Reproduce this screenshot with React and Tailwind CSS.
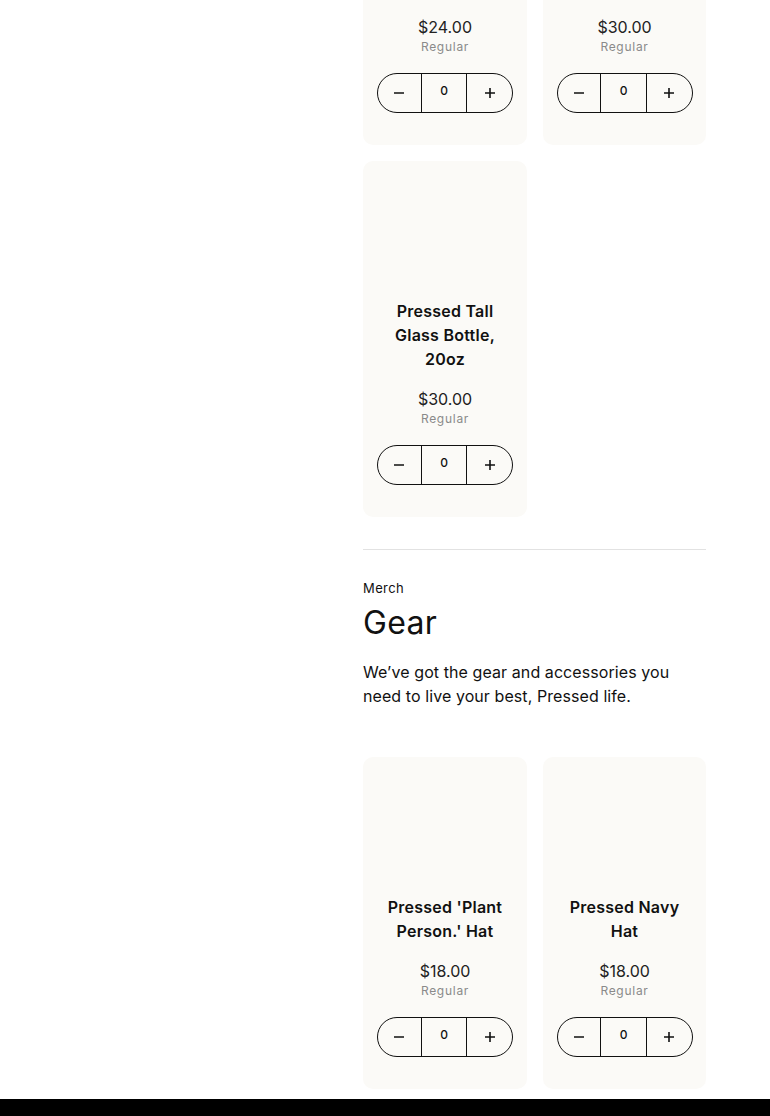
import React from "react";

const font = { fontFamily: "Inter, 'Noto Sans', sans-serif" };

function Minus() {
  return (
    <svg width="12" height="12" viewBox="0 0 12 12" fill="none">
      <path d="M1 6h10" stroke="#111" strokeWidth="1.6" />
    </svg>
  );
}
function Plus() {
  return (
    <svg width="12" height="12" viewBox="0 0 12 12" fill="none">
      <path d="M1 6h10M6 1v10" stroke="#111" strokeWidth="1.6" />
    </svg>
  );
}

function Stepper() {
  return (
    <div className="flex h-[40px] w-[136px] items-stretch rounded-full border border-[#111] overflow-hidden">
      <div className="flex w-[44px] items-center justify-center border-r border-[#111]">
        <Minus />
      </div>
      <div className="flex w-[46px] items-center justify-center border-r border-[#111] pb-[4px] text-[12px] font-medium text-[#111]">
        0
      </div>
      <div className="flex w-[45px] items-center justify-center">
        <Plus />
      </div>
    </div>
  );
}

function Card({ title, price }) {
  return (
    <div className="flex flex-col items-center rounded-[10px] bg-[#fbfaf7] px-4 pb-[32px]">
      <div className="h-[138px] w-full" />
      <div className="text-center text-[16px] font-semibold leading-[24px] tracking-[0.015em] text-[#111]">
        {title}
      </div>
      <div className="mt-[16px] text-[16px] leading-[24px] text-[#222]">{price}</div>
      <div className="text-[12px] leading-[16px] tracking-[0.06em] text-[#8a8a8a]">Regular</div>
      <div className="mt-[18px]">
        <Stepper />
      </div>
    </div>
  );
}

export default function App() {
  return (
    <div className="h-[1116px] w-[770px] overflow-hidden bg-white" style={font}>
      <div className="grid grid-cols-[363px_343px]">
        <div />
        <div className="-mt-[187px] flex flex-col">
          <div className="grid grid-cols-[164px_163px] gap-x-4 gap-y-4">
            <Card title={<>Pressed Classic<br />Glass Bottle</>} price="$24.00" />
            <Card title={<>Pressed Glass<br />Tumbler</>} price="$30.00" />
            <Card title={<>Pressed Tall<br />Glass Bottle,<br />20oz</>} price="$30.00" />
          </div>
          <div className="mt-[32px] h-px w-full bg-[#e2e2e2]" />
          <div className="mt-[28px] text-[13px] leading-[20px] tracking-[0.03em] text-[#111]">Merch</div>
          <div className="mt-[5px] text-[32px] leading-[40px] tracking-[0.01em] text-[#111]">Gear</div>
          <div className="mt-[17px] text-[16px] leading-[24px] tracking-[0.005em] text-[#111]">
            We’ve got the gear and accessories you<br />need to live your best, Pressed life.
          </div>
          <div className="mt-[49px] grid grid-cols-[164px_163px] gap-x-4">
            <Card title={<>Pressed 'Plant<br />Person.' Hat</>} price="$18.00" />
            <Card title={<>Pressed Navy<br />Hat</>} price="$18.00" />
          </div>
        </div>
      </div>
      <div className="mt-[10px] h-[200px] w-full bg-black" />
    </div>
  );
}
